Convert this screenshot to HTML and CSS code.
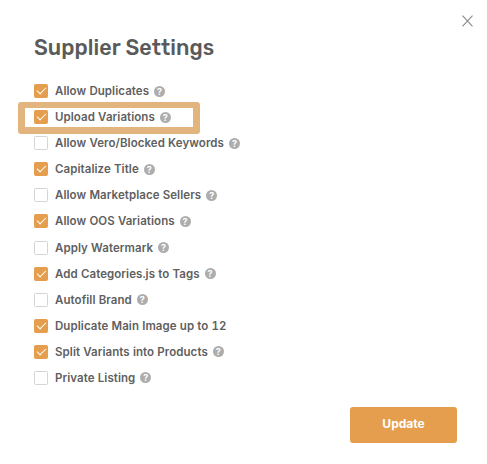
FILE: index.html
```html
<!DOCTYPE html>
<html lang="en">
<head>
    <meta charset="UTF-8">
    <meta name="viewport" content="width=device-width, initial-scale=1.0">
    <title>Supplier Settings</title>
    <link rel="stylesheet" href="styles.css">
</head>
<body>
    <div class="modal">
        <button class="close" aria-label="Close">
            <svg width="11" height="12" viewBox="0 0 11 12"><path d="M.5.7l10 10.6M10.5.7L.5 11.3"/></svg>
        </button>
        <h1>Supplier Settings</h1>

        <div class="settings">
            <label class="option"><input type="checkbox" checked><span>Allow Duplicates</span><i class="help">?</i></label>
            <label class="option highlight"><input type="checkbox" checked><span>Upload Variations</span><i class="help">?</i></label>
            <label class="option"><input type="checkbox"><span>Allow Vero/Blocked Keywords</span><i class="help">?</i></label>
            <label class="option"><input type="checkbox" checked><span>Capitalize Title</span><i class="help">?</i></label>
            <label class="option"><input type="checkbox"><span>Allow Marketplace Sellers</span><i class="help">?</i></label>
            <label class="option"><input type="checkbox" checked><span>Allow OOS Variations</span><i class="help">?</i></label>
            <label class="option"><input type="checkbox"><span>Apply Watermark</span><i class="help">?</i></label>
            <label class="option"><input type="checkbox" checked><span>Add Categories.js to Tags</span><i class="help">?</i></label>
            <label class="option"><input type="checkbox"><span>Autofill Brand</span><i class="help">?</i></label>
            <label class="option"><input type="checkbox" checked><span>Duplicate Main Image up to 12</span></label>
            <label class="option"><input type="checkbox" checked><span>Split Variants into Products</span><i class="help">?</i></label>
            <label class="option"><input type="checkbox"><span>Private Listing</span><i class="help">?</i></label>
        </div>

        <div class="footer">
            <button class="btn">Update</button>
        </div>
    </div>
</body>
</html>
```

FILE: styles.css
```css
body {
    margin: 0;
    background-color: white;
    font-family: Inter, sans-serif;
    color: #5f5f5f;
}
.modal {
    position: relative;
    box-sizing: border-box;
    height: 464px;
    padding: 34px 30px 0 34px;
}
.close {
    position: absolute;
    top: 15px;
    right: 14px;
    padding: 0;
    border: none;
    background: none;
    line-height: 0;
    cursor: pointer;
}
.close svg {
    stroke: #8a8a8a;
    stroke-width: 1.1;
}
h1 {
    margin: 0 0 16px;
    font-family: Rubik, Roboto, sans-serif;
    font-size: 21.5px;
    line-height: 28px;
    font-weight: 500;
    letter-spacing: 0.07px;
    color: #5a5a5a;
    white-space: nowrap;
}
.option {
    position: relative;
    display: flex;
    align-items: center;
    height: 26.08px;
    font-size: 11.5px;
    font-weight: 600;
    letter-spacing: 0.07px;
    font-variant-numeric: tabular-nums;
    white-space: nowrap;
}
.option input {
    appearance: none;
    display: flex;
    align-items: center;
    justify-content: center;
    box-sizing: border-box;
    width: 14px;
    height: 14px;
    margin: 0 7px 0 0;
    border: 1px solid #d5d5d5;
    border-radius: 1.5px;
    background-color: white;
}
.option input:checked {
    border-color: #e59e4d;
    background-color: #e59e4d;
}
.option input:checked::before {
    content: "";
    flex: none;
    width: 9px;
    height: 5px;
    margin-top: -3px;
    box-sizing: border-box;
    border-left: 1px solid white;
    border-bottom: 1px solid white;
    transform: rotate(-45deg);
}
.help {
    width: 11px;
    height: 11px;
    margin-left: 5px;
    border-radius: 50%;
    background-color: #adadad;
    color: white;
    font-size: 9px;
    font-style: normal;
    font-weight: 700;
    line-height: 11px;
    letter-spacing: 0;
    text-align: center;
}
.highlight::after {
    content: "";
    position: absolute;
    top: -2px;
    left: -16px;
    box-sizing: border-box;
    width: 182px;
    height: 32px;
    border: 7px solid #e2b57f;
    border-top-width: 6px;
    border-radius: 3px;
}
.footer {
    display: flex;
    justify-content: flex-end;
    margin-top: 16px;
}
.btn {
    width: 107px;
    height: 36px;
    padding: 0 0 2px;
    border: none;
    border-radius: 3px;
    background-color: #e59e4d;
    color: white;
    font-family: Inter, sans-serif;
    font-size: 12px;
    font-weight: 700;
    cursor: pointer;
}
```
